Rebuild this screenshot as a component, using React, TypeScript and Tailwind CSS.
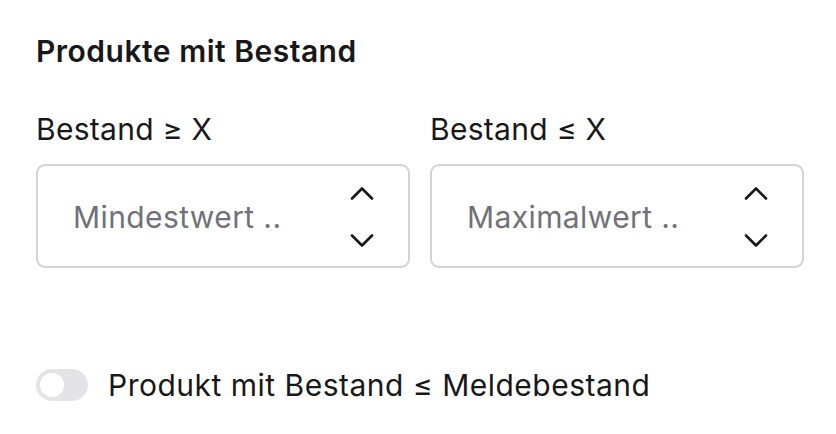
import React from "react";

function Chevrons() {
  return (
    <div className="flex flex-col items-center gap-[34px] pt-[2px]">
      <svg width="24" height="14" viewBox="0 0 24 14" fill="none">
        <path d="M2 12.5L12 2.5L22 12.5" stroke="#18181b" strokeWidth="2.6" strokeLinecap="round" strokeLinejoin="round" />
      </svg>
      <svg width="24" height="14" viewBox="0 0 24 14" fill="none">
        <path d="M2 1.5L12 11.5L22 1.5" stroke="#18181b" strokeWidth="2.6" strokeLinecap="round" strokeLinejoin="round" />
      </svg>
    </div>
  );
}

function NumberField({ label, placeholder }: { label: string; placeholder: string }) {
  return (
    <div className="flex flex-col flex-1">
      <div className="text-[30px] leading-[36px] tracking-[0.3px] text-[#18181b] mb-[17px]">{label}</div>
      <div className="h-[104px] border-2 border-[#d4d4d8] rounded-[9px] flex items-center pl-[35px] pr-[34px] justify-between">
        <span className="text-[30px] leading-[36px] tracking-[0.4px] text-[#71717a] pt-[1px]">{placeholder}</span>
        <Chevrons />
      </div>
    </div>
  );
}

export default function App() {
  return (
    <div className="w-[836px] h-[434px] bg-white pl-[36px] pr-[32px] pt-[33px]" style={{ fontFamily: "Inter, 'Noto Sans', sans-serif" }}>
      <h2 className="text-[30px] leading-[36px] tracking-[0.5px] font-semibold text-[#18181b] mb-[42px]">Produkte mit Bestand</h2>
      <div className="flex gap-[20px]">
        <NumberField label="Bestand ≥ X" placeholder="Mindestwert .." />
        <NumberField label="Bestand ≤ X" placeholder="Maximalwert .." />
      </div>
      <div className="flex items-center gap-[20px] mt-[101px]">
        <div className="w-[52px] h-[32px] rounded-full bg-[#e4e4e7] flex items-center pl-[4px] shrink-0">
          <div className="w-[24px] h-[24px] rounded-full bg-white" />
        </div>
        <span className="text-[30px] leading-[32px] tracking-[0.5px] text-[#18181b]">Produkt mit Bestand ≤ Meldebestand</span>
      </div>
    </div>
  );
}
